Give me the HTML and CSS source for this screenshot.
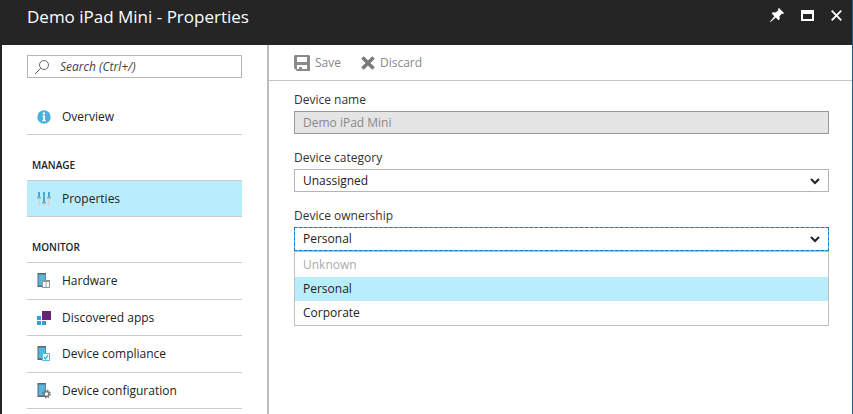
FILE: index.html
```html
<!DOCTYPE html>
<html lang="en">

<head>
  <meta charset="UTF-8">
  <meta name="viewport" content="width=device-width, initial-scale=1.0">
  <title>Demo iPad Mini - Properties</title>
  <link rel="stylesheet" href="styles.css">
</head>

<body>
  <div class="blade">
    <header class="blade-header">
      <h1>Demo iPad Mini - Properties</h1>
      <div class="window-actions">
        <button type="button" aria-label="Pin">
          <svg width="14" height="14" viewBox="0 0 14 14" fill="#fff">
            <path d="M9 0l5 5-1 1-1.200-.3-2.400 2.600.4 2.800-1.300 1.200-2.700-2.700L.6 14 0 13.400l4.400-5.200-2.700-2.700L3 4.200l2.700.4L8.300 2.200 8 1z" />
          </svg>
        </button>
        <button type="button" aria-label="Maximize">
          <svg width="13" height="11" viewBox="0 0 13 11">
            <path fill="#fff" fill-rule="evenodd" d="M0 0h13v11H0zM2 4v5h9V4z" />
          </svg>
        </button>
        <button type="button" aria-label="Close">
          <svg width="11" height="11" viewBox="0 0 11 11" fill="none" stroke="#fff" stroke-width="1.800">
            <path d="M.7.7l9.600 9.600M10.300.7L.7 10.300" />
          </svg>
        </button>
      </div>
    </header>

    <div class="blade-body">
      <aside class="sidebar">
        <form class="search">
          <svg width="16" height="16" viewBox="0 0 16 16" fill="none" stroke="#666">
            <circle cx="10" cy="6" r="4.500" />
            <path d="M6.800 9.200L1 15" />
          </svg>
          <input type="text" aria-label="Search" placeholder="Search (Ctrl+/)">
        </form>

        <nav>
          <ul class="menu">
            <li>
              <a href="#overview">
                <svg width="14" height="14" viewBox="0 0 14 14">
                  <circle cx="7" cy="7" r="6.700" fill="#4bb0db" />
                  <circle cx="7" cy="3.400" r="1.200" fill="#fff" />
                  <path fill="#fff" d="M5.200 5.500H8v4.700h1v1H5.200v-1h1V6.500h-1z" />
                </svg>
                Overview
              </a>
            </li>
          </ul>

          <h2>MANAGE</h2>
          <ul class="menu menu-lined">
            <li class="active">
              <a href="#properties">
                <svg width="14" height="14" viewBox="0 0 14 14">
                  <path fill="#cfd9dd" d="M1 7h2v7H1zM6 12h2v2H6zM11 7h2v7h-2z" />
                  <path fill="#45a9d6" d="M1 0h2v5H1zM6 0h2v10H6zM11 0h2v5h-2z" />
                  <path fill="#93a3aa" d="M0 5h4v1.500H0zM5 10h4v1.500H5zM10 5h4v1.500h-4z" />
                </svg>
                Properties
              </a>
            </li>
          </ul>

          <h2>MONITOR</h2>
          <ul class="menu menu-lined menu-monitor">
            <li>
              <a href="#hardware">
                <svg width="14" height="16" viewBox="0 0 14 16">
                  <path fill="#59656c" d="M.5 0h8.500v14H.5z" />
                  <path fill="#55b7df" d="M1.500 1.500h7v11h-7z" />
                  <path fill="#8e969a" d="M5 7h8v8H5z" />
                  <path fill="#fff" d="M6 9h2v5H6zM10 9h2v5h-2z" />
                  <path fill="#ccd3d6" d="M8 9h2v5H8z" />
                </svg>
                Hardware
              </a>
            </li>
            <li>
              <a href="#apps">
                <svg width="14" height="14" viewBox="0 0 14 14">
                  <path fill="#68217a" d="M5 0h9v9H5z" />
                  <path fill="#2f9fd4" d="M0 5h4v4H0zM0 10h4v4H0zM5 10h4v4H5z" />
                </svg>
                Discovered apps
              </a>
            </li>
            <li>
              <a href="#compliance">
                <svg width="14" height="16" viewBox="0 0 14 16">
                  <path fill="#59656c" d="M.5 0h8.500v14H.5z" />
                  <path fill="#55b7df" d="M1.500 1.500h7v11h-7z" />
                  <path fill="#fff" stroke="#55b7df" d="M5.500 7.500h7v7h-7z" />
                  <path fill="none" stroke="#2f9fd4" stroke-width="1.200" d="M7 11l1.500 1.800L11 9" />
                </svg>
                Device compliance
              </a>
            </li>
            <li>
              <a href="#configuration">
                <svg width="14" height="16" viewBox="0 0 14 16">
                  <path fill="#59656c" d="M.5 0h8.500v14H.5z" />
                  <path fill="#55b7df" d="M1.500 1.500h7v11h-7z" />
                  <circle cx="9.500" cy="11" r="3.700" fill="none" stroke="#72787c" stroke-width="1.400" stroke-dasharray="1.500 1.400" />
                  <circle cx="9.500" cy="11" r="2.400" fill="#fff" stroke="#72787c" stroke-width="1.500" />
                </svg>
                Device configuration
              </a>
            </li>
          </ul>
        </nav>
      </aside>

      <main class="content">
        <div class="toolbar">
          <button type="button" disabled>
            <svg width="16" height="16" viewBox="0 0 16 16">
              <path fill="#8a8a8a" fill-rule="evenodd" d="M1 0h14l1 1v15H3l-3-3V1zM3 2v5h10V2zM3 10v4h2v-2h3v2h5v-4z" />
            </svg>
            Save
          </button>
          <button type="button" disabled>
            <svg width="14" height="14" viewBox="0 0 14 14" fill="none" stroke="#7a7a7a" stroke-width="3.500">
              <path d="M1.500 1.500l11 11M12.500 1.500l-11 11" />
            </svg>
            Discard
          </button>
        </div>

        <form class="fields">
          <div class="field">
            <label for="name">Device name</label>
            <input id="name" type="text" value="Demo iPad Mini" disabled>
          </div>

          <div class="field">
            <label for="category">Device category</label>
            <div class="select">
              <select id="category">
                <option>Unassigned</option>
              </select>
              <svg width="10" height="7" viewBox="0 0 10 7" fill="none" stroke="#222" stroke-width="2">
                <path d="M1 1l4 4 4-4" />
              </svg>
            </div>
          </div>

          <div class="field">
            <label for="ownership">Device ownership</label>
            <div class="select open">
              <select id="ownership">
                <option disabled>Unknown</option>
                <option selected>Personal</option>
                <option>Corporate</option>
              </select>
              <svg width="10" height="7" viewBox="0 0 10 7" fill="none" stroke="#222" stroke-width="2">
                <path d="M1 1l4 4 4-4" />
              </svg>
              <ul class="options" role="listbox" aria-label="Device ownership">
                <li class="disabled" role="option" aria-disabled="true">Unknown</li>
                <li class="selected" role="option" aria-selected="true">Personal</li>
                <li role="option">Corporate</li>
              </ul>
            </div>
          </div>
        </form>
      </main>
    </div>
  </div>
</body>

</html>
```
FILE: styles.css
```css
* {
  box-sizing: border-box;
}

body {
  margin: 0;
  font-family: "Open Sans", "Noto Sans", sans-serif;
  font-size: 12px;
  line-height: 16px;
  color: #222;
  background-color: #fff;
}

h1,
h2,
ul {
  margin: 0;
  padding: 0;
  font-weight: normal;
  list-style: none;
}

button,
input,
select {
  font: inherit;
  color: inherit;
}

button {
  display: flex;
  align-items: center;
  padding: 0;
  border: none;
  background: none;
}

svg {
  flex: none;
}

.blade {
  display: flex;
  flex-direction: column;
  height: 100vh;
  overflow: hidden;
  border-left: 2px solid #252525;
  border-right: 1px solid #1b5e8a;
}

.blade-header {
  display: flex;
  justify-content: space-between;
  flex: none;
  height: 45px;
  padding: 5px 10px 0 25px;
  color: #fff;
  background-color: #252525;
}

.blade-header h1 {
  font-size: 17px;
  line-height: 24px;
}

.window-actions {
  display: flex;
  align-items: center;
  gap: 17px;
  height: 20px;
}

.blade-body {
  display: flex;
  flex: 1;
  min-height: 0;
}

/* sidebar */
.sidebar {
  flex: none;
  width: 267px;
  padding: 10px 25px 0;
  border-right: 2px solid #bdbdbd;
  overflow: hidden;
}

.search {
  display: flex;
  align-items: center;
  gap: 10px;
  height: 23px;
  padding: 0 6px;
  border: 1px solid #b5b5b5;
}

.search input {
  flex: 1;
  min-width: 0;
  padding: 0;
  border: none;
  outline: none;
}

.search input::placeholder {
  color: #444;
  font-style: italic;
  opacity: 1;
}

nav {
  padding-top: 21px;
}

nav h2 {
  padding: 22px 5px 7px;
  font-size: 10px;
  font-weight: 600;
}

.menu li {
  border-bottom: 1px solid #ccc;
}

.menu a {
  display: flex;
  align-items: center;
  gap: 11px;
  height: 35px;
  padding-left: 10px;
  color: inherit;
  text-decoration: none;
}

.menu-lined {
  border-top: 1px solid #ccc;
}

.menu-monitor li:nth-child(odd) a {
  height: 36px;
}

.menu .active {
  background-color: #baedfb;
}

/* content */
.content {
  flex: 1;
  min-width: 0;
}

.toolbar {
  display: flex;
  gap: 20px;
  height: 36px;
  padding: 1px 0 0 25px;
  border-bottom: 1px solid #c4c4c4;
}

.toolbar button {
  gap: 5px;
  color: #888;
}

.fields {
  display: flex;
  flex-direction: column;
  gap: 16px;
  padding: 11px 23px 0 25px;
}

.field {
  display: flex;
  flex-direction: column;
  gap: 3px;
}

.field label {
  color: #333;
}

.field input,
.field select {
  width: 100%;
  height: 23px;
  padding: 0 8px;
  border: 1px solid #b5b5b5;
  border-radius: 0;
  outline: none;
  appearance: none;
  background-color: #fff;
}

.field input:disabled {
  color: #888;
  border-color: #999;
  background-color: #e5e5e5;
}

.select {
  position: relative;
  display: flex;
}

.select svg {
  position: absolute;
  top: 9px;
  right: 9px;
  pointer-events: none;
}

.select.open select {
  height: 24px;
  border-color: #35c4f5;
  outline: 1px dashed #2c6fb5;
  outline-offset: -1px;
}

.options {
  position: absolute;
  top: 100%;
  left: 0;
  right: 0;
  padding-top: 1px;
  border: 1px solid #c0c0c0;
  background-color: #fff;
}

.options li {
  height: 24px;
  padding: 0 8px;
  line-height: 24px;
}

.options .disabled {
  color: #aaa;
}

.options .selected {
  background-color: #baedfb;
}
```
